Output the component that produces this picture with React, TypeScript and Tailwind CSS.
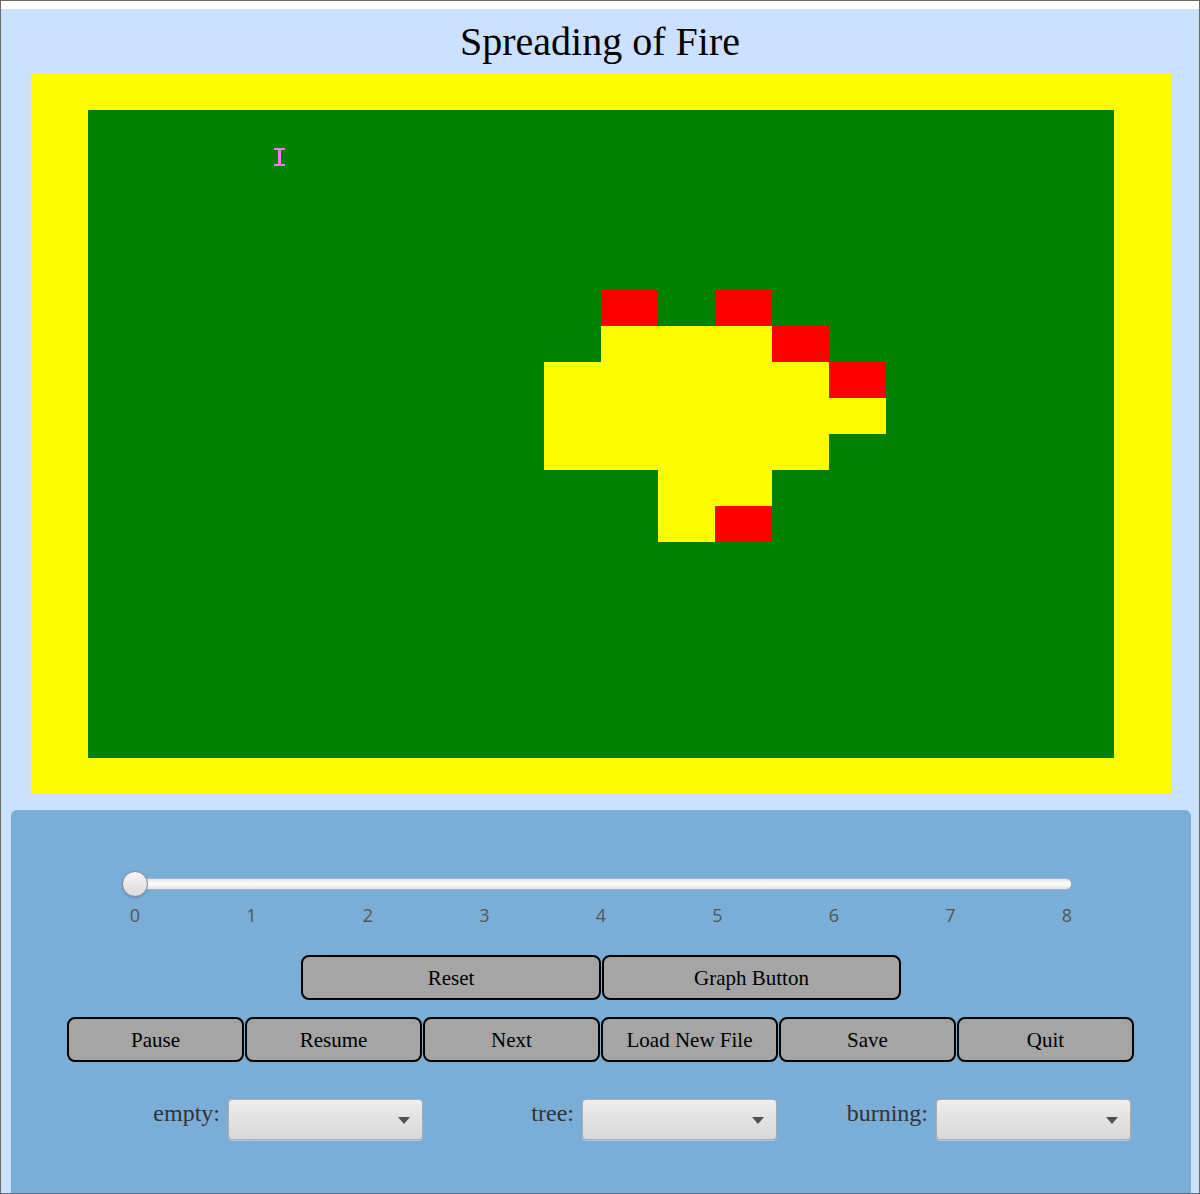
import React from "react";

const ROWS = 18;
const COLS = 18;

const fire: Record<string, "y" | "r"> = {};
const setRange = (r: number, c1: number, c2: number, v: "y" | "r") => {
  for (let c = c1; c <= c2; c++) fire[`${r}-${c}`] = v;
};
setRange(5, 9, 9, "r");
setRange(5, 11, 11, "r");
setRange(6, 9, 11, "y");
setRange(6, 12, 12, "r");
setRange(7, 8, 12, "y");
setRange(7, 13, 13, "r");
setRange(8, 8, 13, "y");
setRange(9, 8, 12, "y");
setRange(10, 10, 11, "y");
setRange(11, 10, 10, "y");
setRange(11, 11, 11, "r");

const serif = { fontFamily: '"Liberation Serif", "Times New Roman", serif' };

function Btn({ label, w }: { label: string; w: string }) {
  return (
    <div
      className={`${w} h-[45px] flex items-center justify-center pt-[2px] rounded-[8px] border-2 border-black bg-[#a5a5a5] text-[21px] text-black`}
      style={serif}
    >
      {label}
    </div>
  );
}

function Select({ label }: { label: string }) {
  return (
    <div className="flex items-start justify-end gap-[8px]">
      <span className="text-[24px] leading-[28px] text-[#333333]" style={serif}>
        {label}
      </span>
      <div className="relative w-[195px] h-[41px] rounded-[4px] border border-[#adadad] bg-gradient-to-b from-[#eeeeee] via-[#e2e2e2] to-[#d9d9d9] shadow-[0_1px_0_#a9cbe8]">
        <div className="absolute right-[12px] top-[17px] w-0 h-0 border-l-[6px] border-r-[6px] border-t-[7px] border-l-transparent border-r-transparent border-t-[#505050]" />
      </div>
    </div>
  );
}

export default function App() {
  const cells: React.ReactNode[] = [];
  for (let r = 0; r < ROWS; r++) {
    for (let c = 0; c < COLS; c++) {
      const v = fire[`${r}-${c}`];
      const cls = v === "r" ? "bg-[#ff0000]" : v === "y" ? "bg-[#ffff00]" : "bg-[#008000]";
      cells.push(<div key={`${r}-${c}`} className={`w-[57px] h-[36px] ${cls}`} />);
    }
  }

  return (
    <div className="w-[1200px] h-[1194px] border border-[#6b6b6b] flex flex-col bg-white overflow-hidden">
      <div className="h-[8px] bg-white" />
      <div className="flex-1 flex flex-col bg-[#cce0ff]">
        <div className="h-[64px] pt-[2px] flex items-center justify-center">
          <h1 className="text-[40px] leading-none text-black" style={serif}>
            Spreading of Fire
          </h1>
        </div>

        <div className="ml-[30px] w-[1140px] bg-[#ffff00] pt-[37px] pb-[36px] pl-[57px]">
          <div className="relative grid grid-cols-[repeat(18,57px)] w-[1026px]">
            {cells}
            <svg
              className="absolute left-[186px] top-[38px]"
              width="11"
              height="18"
              viewBox="0 0 11 18"
            >
              <rect x="0" y="0" width="11" height="2" fill="#f27ff2" />
              <rect x="4" y="0" width="3" height="18" fill="#f27ff2" />
              <rect x="0" y="16" width="11" height="2" fill="#f27ff2" />
            </svg>
          </div>
        </div>

        <div className="mt-[16px] ml-[10px] w-[1180px] flex-1 rounded-t-[6px] bg-[#7aaed7] flex flex-col">
          <div className="mt-[61px] ml-[111px] w-[950px] h-[26px] relative">
            <div className="ml-[6px] mt-[7px] h-[12px] rounded-full border border-[#9fb3cc] bg-gradient-to-b from-[#e8e8e8] via-[#ffffff] to-[#e4e4e4]" />
            <div className="absolute left-0 top-0 w-[26px] h-[26px] rounded-full border border-[#878c96] bg-gradient-to-b from-[#f6f6f6] to-[#dadada] shadow-[0_1px_2px_rgba(0,0,0,0.2)]" />
          </div>
          <div
            className="mt-[8px] ml-[114px] w-[952px] flex justify-between text-[18px] leading-[20px] text-[#555555]"
            style={{ fontFamily: '"Open Sans", "Liberation Sans", sans-serif' }}
          >
            {["0", "1", "2", "3", "4", "5", "6", "7", "8"].map((t) => (
              <span key={t} className="w-[20px] text-center">
                {t}
              </span>
            ))}
          </div>

          <div className="mt-[30px] ml-[290px] flex gap-[1px]">
            <Btn label="Reset" w="w-[300px]" />
            <Btn label="Graph Button" w="w-[299px]" />
          </div>

          <div className="mt-[17px] ml-[56px] flex gap-[1px]">
            {["Pause", "Resume", "Next", "Load New File", "Save", "Quit"].map((l) => (
              <Btn key={l} label={l} w="w-[177px]" />
            ))}
          </div>

          <div className="mt-[37px] ml-[58px] grid grid-cols-[repeat(3,354px)]">
            <Select label="empty:" />
            <Select label="tree:" />
            <Select label="burning:" />
          </div>
        </div>
      </div>
    </div>
  );
}
